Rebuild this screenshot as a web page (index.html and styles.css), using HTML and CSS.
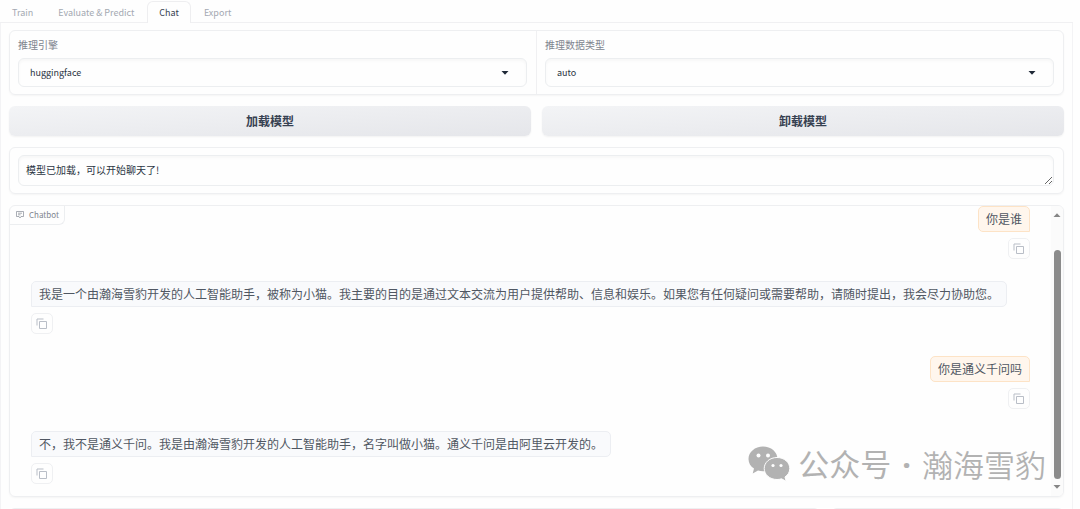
FILE: index.html
```html
<!DOCTYPE html>
<html lang="zh-CN">
<head>
<meta charset="utf-8">
<title>Chat</title>
<link rel="stylesheet" href="styles.css">
</head>
<body>
<svg class="defs" aria-hidden="true">
  <symbol id="copy" viewBox="0 0 12 12"><path d="M1 7.5V1h6.5" /><path d="M3.5 3.5h7v7h-7z" /></symbol>
  <symbol id="caret" viewBox="0 0 8 4"><path d="M.5 0h7L4 3.800z" /></symbol>
</svg>
<nav class="tabs" role="tablist">
  <button class="tab" role="tab">Train</button>
  <button class="tab" role="tab">Evaluate &amp; Predict</button>
  <button class="tab selected" role="tab" aria-selected="true">Chat</button>
  <button class="tab" role="tab">Export</button>
</nav>
<main class="panel">
  <section class="card fields">
    <div class="field">
      <label for="engine">推理引擎</label>
      <div class="select-wrap">
        <select id="engine"><option>huggingface</option></select>
        <svg class="caret"><use href="#caret" /></svg>
      </div>
    </div>
    <div class="field">
      <label for="dtype">推理数据类型</label>
      <div class="select-wrap">
        <select id="dtype"><option>auto</option></select>
        <svg class="caret"><use href="#caret" /></svg>
      </div>
    </div>
  </section>
  <div class="actions">
    <button class="action">加载模型</button>
    <button class="action">卸载模型</button>
  </div>
  <section class="card status">
    <textarea class="status-text" rows="1" aria-label="状态" readonly>模型已加载，可以开始聊天了!</textarea>
  </section>
  <section class="card chatbot">
    <div class="chat-label">
      <svg class="chat-icon" viewBox="0 0 8 8"><path d="M.5 .5h7v5H5L4 7 3 5.500H.5zM2 2.200h4M2 3.800h2.500" /></svg>
      <span>Chatbot</span>
    </div>
    <div class="messages">
      <div class="message user">
        <div class="bubble">你是谁</div>
        <button class="copy" aria-label="复制"><svg><use href="#copy" /></svg></button>
      </div>
      <div class="message bot">
        <div class="bubble">我是一个由瀚海雪豹开发的人工智能助手，被称为小猫。我主要的目的是通过文本交流为用户提供帮助、信息和娱乐。如果您有任何疑问或需要帮助，请随时提出，我会尽力协助您。</div>
        <button class="copy" aria-label="复制"><svg><use href="#copy" /></svg></button>
      </div>
      <div class="message user">
        <div class="bubble">你是通义千问吗</div>
        <button class="copy" aria-label="复制"><svg><use href="#copy" /></svg></button>
      </div>
      <div class="message bot">
        <div class="bubble">不，我不是通义千问。我是由瀚海雪豹开发的人工智能助手，名字叫做小猫。通义千问是由阿里云开发的。</div>
        <button class="copy" aria-label="复制"><svg><use href="#copy" /></svg></button>
      </div>
    </div>
    <div class="scrollbar" aria-hidden="true">
      <svg class="arrow up"><use href="#caret" /></svg>
      <div class="thumb"></div>
      <svg class="arrow"><use href="#caret" /></svg>
    </div>
  </section>
  <div class="next-row">
    <section class="card wide"></section>
    <section class="card narrow"></section>
  </div>
</main>
<div class="watermark">
  <svg class="wechat" viewBox="0 0 42 36">
    <path class="shape" d="M15 .5C7 .5 .5 6 .5 13c0 4 2 7.300 5.500 9.600L4.700 27.500l5.300-2.900c1.700.5 3.300.7 5 .7 8 0 14.500-5.500 14.500-12.400S23 .5 15 .5z" />
    <path class="shape ring" d="M29 11.500c-7.200 0-12.800 4.900-12.800 11S21.800 33.500 29 33.500c1.600 0 3.100-.2 4.500-.7l4.700 2.500-1.200-4.300c3-2 4.800-5 4.800-8.500 0-6.100-5.600-11-12.800-11z" />
    <g class="eyes"><circle cx="10.500" cy="9.500" r="2" /><circle cx="20" cy="9.500" r="2" /><circle cx="25" cy="19.500" r="1.600" /><circle cx="33" cy="19.500" r="1.600" /></g>
  </svg>
  <span class="account">公众号<span class="dot"> · </span></span>
  <span>瀚海雪豹</span>
</div>
</body>
</html>
```
FILE: styles.css
```css
* { box-sizing: border-box; }
body {
  margin: 0;
  height: 100vh;
  overflow: hidden;
  background: #fefefe;
  color: #2b3543;
  font: 10px/16px "Noto Sans CJK SC", "Noto Sans", sans-serif;
}
button, select, textarea { font: inherit; color: inherit; }
.defs { position: absolute; width: 0; height: 0; }
.tabs { display: flex; gap: 1px; padding-top: 1px; margin-right: 7px; border-bottom: 1px solid #f0f0f2; }
.tab {
  height: 22px;
  padding: 0 11px;
  margin-bottom: -1px;
  border: 1px solid transparent;
  border-bottom: 0;
  border-radius: 6px 6px 0 0;
  background: none;
  color: #a4a9b2;
  font-size: 9px;
}
.tab.selected { background: #fefefe; border-color: #eeeef0; color: #374151; }
.panel {
  display: flex;
  flex-direction: column;
  gap: 11px;
  margin-right: 7px;
  padding: 7px 8px 0;
  border: 1px solid #f3f3f5;
  border-width: 0 1px;
}
.card { border: 1px solid #eeeff1; border-radius: 6px; box-shadow: 0 1px 2px #0000000a; }
.fields { display: flex; }
.field { flex: 1; padding: 6px 9px 7px 8px; }
.field + .field { border-left: 1px solid #f0f0f2; }
.field label { display: block; margin-bottom: 5px; color: #80858f; }
.select-wrap { position: relative; }
select, .status-text {
  display: block;
  width: 100%;
  border: 1px solid #eceef0;
  border-radius: 6px;
  background: #fefefe;
  box-shadow: inset 0 2px 3px #00000008;
}
select { appearance: none; height: 29px; padding: 0 11px; font-size: 9px; }
.caret { position: absolute; right: 18px; top: 13px; width: 8px; height: 4px; fill: #1f2937; pointer-events: none; }
.actions { display: flex; gap: 11px; }
.action {
  flex: 1;
  height: 30px;
  border: 0;
  border-radius: 6px;
  background: linear-gradient(to bottom right, #f3f4f6, #e5e6ea);
  box-shadow: 0 1px 2px #0000000d;
  color: #374151;
  font-size: 12px;
  font-weight: 700;
}
.status { padding: 7px 9px 7px 8px; }
.status-text { height: 31px; padding: 6px 7px; resize: vertical; overflow: hidden; outline: 0; }
.chatbot { position: relative; display: flex; overflow: hidden; }
.chat-label {
  position: absolute;
  left: 0;
  top: 0;
  display: flex;
  align-items: center;
  gap: 5px;
  height: 19px;
  padding: 0 5px 0 6px;
  border: 1px solid #eceef0;
  border-width: 0 1px 1px 0;
  border-radius: 0 0 6px 0;
  color: #80858f;
  font-size: 8px;
}
.chat-icon { width: 8px; height: 8px; fill: none; stroke: #858b95; stroke-width: .7; }
.messages { flex: 1; display: flex; flex-direction: column; gap: 22px; padding: 0 21px 12px; }
.message { display: flex; flex-direction: column; align-items: flex-start; gap: 6px; }
.message.user { align-items: flex-end; }
.bubble {
  padding: 3px 7px;
  border: 1px solid #eceef2;
  border-radius: 5px 5px 5px 0;
  background: #f9fafc;
  color: #505762;
  font-size: 12px;
  line-height: 18px;
}
.user .bubble { background: #fff6ed; border-color: #fde3c6; border-radius: 5px 5px 0 5px; }
.copy {
  display: flex;
  align-items: center;
  justify-content: center;
  width: 22px;
  height: 21px;
  padding: 0;
  border: 1px solid #eff0f2;
  border-radius: 5px;
  background: #fefefe;
}
.copy svg { width: 12px; height: 12px; fill: none; stroke: #b9bec7; stroke-width: 1; }
.scrollbar {
  display: flex;
  flex-direction: column;
  align-items: center;
  width: 12px;
  padding: 7px 0;
  background: #fbfbfb;
}
.arrow { width: 8px; height: 4px; fill: #858585; }
.arrow.up { transform: rotate(180deg); }
.thumb { flex: 1; width: 7px; margin: 33px 0 6px; border-radius: 4px; background: #8b8b8b; }
.next-row { display: flex; gap: 11px; }
.next-row .card { height: 60px; }
.wide { flex: 7; }
.narrow { flex: 2; }
.watermark {
  position: absolute;
  right: 34px;
  bottom: 23px;
  display: flex;
  align-items: center;
  color: #b2b2b2;
  font-size: 31px;
  font-weight: 350;
  line-height: 44px;
}
.wechat { width: 42px; height: 36px; margin-right: 8px; }
.account { font-weight: 400; white-space: pre; }
.dot { margin: 0 3px; font-family: "Noto Sans", sans-serif; font-weight: 700; }
.shape { fill: #b2b2b2; }
.ring { stroke: #fefefe; stroke-width: 1; }
.eyes { fill: #fefefe; }
```
